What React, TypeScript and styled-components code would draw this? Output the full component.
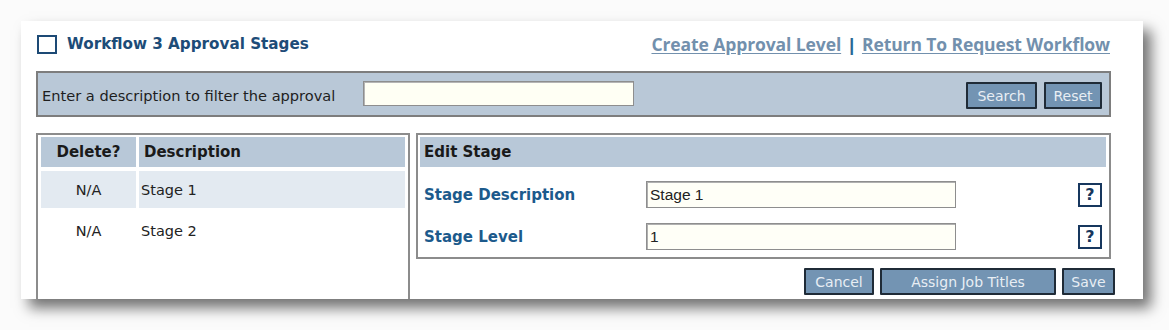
import * as React from "react";
import styled, { createGlobalStyle } from "styled-components";

const GlobalStyle = createGlobalStyle`
  body {
    margin: 0;
    background: #fbfbfb;
    font-family: "DejaVu Sans", Verdana, sans-serif;
  }
`;

interface IStage {
  id: number;
  description: string;
}

const stages: IStage[] = [
  { id: 1, description: "Stage 1" },
  { id: 2, description: "Stage 2" },
];

const App: React.FC = () => {
  return (
    <Page>
      <GlobalStyle />
      <Card>
        <TitleRow>
          <Title>
            <CheckSquare />
            Workflow 3 Approval Stages
          </Title>
          <Links>
            <TopLink href="#">Create Approval Level</TopLink>
            <Separator>|</Separator>
            <TopLink href="#">Return To Request Workflow</TopLink>
          </Links>
        </TitleRow>

        <FilterBar>
          <FilterLabel>Enter a description to filter the approval</FilterLabel>
          <FilterInput />
          <FilterActions>
            <Button width={71}>Search</Button>
            <Button width={58}>Reset</Button>
          </FilterActions>
        </FilterBar>

        <Panels>
          <ListPanel>
            <StageTable>
              <thead>
                <tr>
                  <HeadCell align="center" width={95}>
                    Delete?
                  </HeadCell>
                  <HeadCell>Description</HeadCell>
                </tr>
              </thead>
              <tbody>
                {stages.map(({ id, description }, i) => (
                  <tr key={id}>
                    <Cell align="center" selected={i === 0}>
                      N/A
                    </Cell>
                    <Cell selected={i === 0}>{description}</Cell>
                  </tr>
                ))}
              </tbody>
            </StageTable>
          </ListPanel>

          <EditColumn>
            <EditPanel>
              <EditHeader>Edit Stage</EditHeader>
              <Form>
                <FieldLabel>Stage Description</FieldLabel>
                <FieldInput defaultValue="Stage 1" />
                <Help>?</Help>
                <FieldLabel>Stage Level</FieldLabel>
                <FieldInput defaultValue="1" />
                <Help>?</Help>
              </Form>
            </EditPanel>
            <EditActions>
              <Button width={70}>Cancel</Button>
              <Button width={176}>Assign Job Titles</Button>
              <Button width={53}>Save</Button>
            </EditActions>
          </EditColumn>
        </Panels>
      </Card>
    </Page>
  );
};

export default App;

const Page = styled.div`
  padding: 21px 0 0 21px;
  height: 330px;
  box-sizing: border-box;
`;

const Card = styled.div`
  width: 1122px;
  height: 278px;
  box-sizing: border-box;
  background: #ffffff;
  overflow: hidden;
  padding: 12px 32px 0 15px;
  box-shadow: 8px 9px 13px rgba(0, 0, 0, 0.55);
`;

const TitleRow = styled.div`
  display: flex;
  align-items: center;
  justify-content: space-between;
  height: 22px;
  margin-bottom: 16px;
`;

const Title = styled.div`
  display: flex;
  align-items: center;
  gap: 10px;
  font-size: 15.2px;
  font-weight: bold;
  color: #1d4c78;
  padding-left: 1px;
`;

const CheckSquare = styled.span`
  width: 20px;
  height: 19px;
  box-sizing: border-box;
  border: 2.5px solid #1d4a75;
`;

const Links = styled.div`
  display: flex;
  align-items: center;
  gap: 6px;
  margin-right: 1px;
  font-family: "Open Sans", Lato, sans-serif;
  font-size: 17.5px;
  font-weight: bold;
  letter-spacing: -0.1px;
`;

const TopLink = styled.a`
  color: #7290ad;
  text-decoration: underline;
  text-underline-offset: 2px;
`;

const Separator = styled.span`
  color: #2a6898;
  font-weight: 800;
`;

const FilterBar = styled.div`
  display: flex;
  align-items: center;
  height: 46px;
  box-sizing: border-box;
  border: 2px solid #7d7d7d;
  background: #b9c8d7;
  padding: 0 7px 0 4px;
`;

const FilterLabel = styled.span`
  font-size: 14.6px;
  color: #1e1e1e;
  width: 321px;
  margin-top: 3px;
  white-space: nowrap;
`;

const FilterInput = styled.input`
  width: 271px;
  height: 25px;
  box-sizing: border-box;
  margin-top: -2px;
  border: 1px solid #8e8e8e;
  box-shadow: inset 1px 1px 0 #b5b5b5;
  background: #fffff4;
`;

const FilterActions = styled.div`
  display: flex;
  gap: 7px;
  margin-left: auto;
  margin-top: 3px;
`;

const Button = styled.button<{ width: number }>`
  width: ${(p) => p.width}px;
  height: 27px;
  box-sizing: border-box;
  border: 2px solid #1f2b37;
  border-radius: 1px;
  background: #7394b3;
  color: #e8eef4;
  font-family: "DejaVu Sans", Verdana, sans-serif;
  font-size: 14px;
  padding: 0;
`;

const Panels = styled.div`
  display: flex;
  gap: 6px;
  margin-top: 16px;
`;

const ListPanel = styled.div`
  width: 374px;
  height: 200px;
  box-sizing: border-box;
  border: 2px solid #8c8c8c;
  flex-shrink: 0;
`;

const StageTable = styled.table`
  width: 100%;
  border-spacing: 3px 4px;
  margin-top: -2px;
  font-size: 14.5px;
`;

const HeadCell = styled.th<{ width?: number }>`
  height: 30px;
  padding: 0 5px;
  background: #b8c8d8;
  color: #1a1a1a;
  font-size: 15px;
  text-align: left;
  ${(p) => (p.width ? `width: ${p.width - 10}px;` : "")}
  &[align="center"] {
    text-align: center;
  }
`;

const Cell = styled.td<{ selected?: boolean }>`
  height: 37px;
  padding: 0 2px;
  background: ${(p) => (p.selected ? "#e3eaf1" : "#ffffff")};
  color: #222222;
`;

const EditColumn = styled.div`
  display: flex;
  flex-direction: column;
  width: 696px;
`;

const EditPanel = styled.div`
  height: 126px;
  box-sizing: border-box;
  border: 2px solid #8c8c8c;
  padding: 2px 3px 0 2px;
`;

const EditHeader = styled.div`
  height: 30px;
  display: flex;
  align-items: center;
  padding-left: 4px;
  background: #b8c8d8;
  color: #1a1a1a;
  font-size: 15px;
  font-weight: bold;
`;

const Form = styled.div`
  display: grid;
  grid-template-columns: 222px 310px 1fr;
  row-gap: 15px;
  align-items: center;
  margin-top: 14px;
  padding-left: 4px;
`;

const FieldLabel = styled.label`
  font-size: 15px;
  font-weight: bold;
  color: #1c5a8c;
`;

const FieldInput = styled.input`
  height: 27px;
  box-sizing: border-box;
  border: 1px solid #8e8e8e;
  box-shadow: inset 1px 1px 0 #b0b0b0;
  background: #fffff7;
  font-family: "Liberation Sans", Arial, sans-serif;
  font-size: 15.5px;
  color: #222222;
  padding: 0 3px;
`;

const Help = styled.span`
  justify-self: end;
  margin-right: 4px;
  width: 24px;
  height: 24px;
  box-sizing: border-box;
  border: 2px solid #17375e;
  display: flex;
  align-items: center;
  justify-content: center;
  font-size: 16px;
  font-weight: bold;
  color: #17375e;
`;

const EditActions = styled.div`
  display: flex;
  justify-content: flex-end;
  gap: 6px;
  margin-top: 9px;
  margin-right: -4px;
`;
